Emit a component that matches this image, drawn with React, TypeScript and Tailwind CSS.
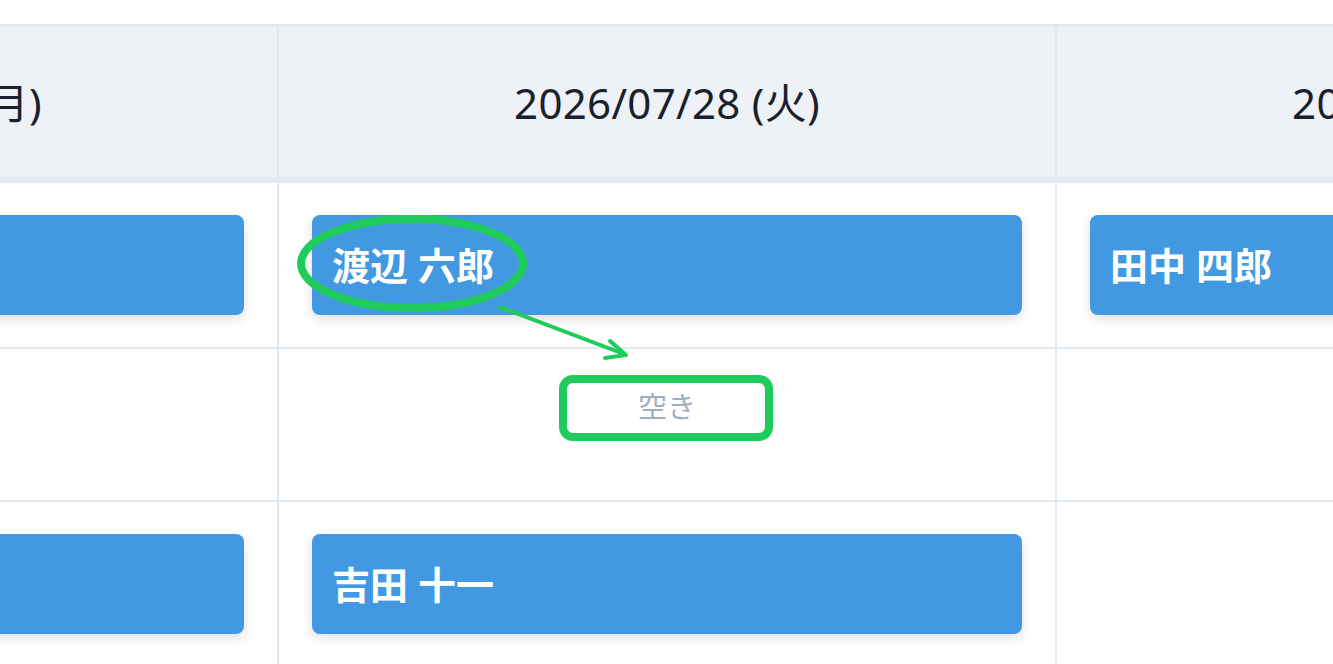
import React from "react";

type Cell = { name?: string; empty?: boolean };

const days = ["2026/07/27 (月)", "2026/07/28 (火)", "2026/07/29 (水)"];

const rows: { h: string; cells: Cell[] }[] = [
  { h: "h-[164px]", cells: [{ name: "佐藤 一郎" }, { name: "渡辺 六郎" }, { name: "田中 四郎" }] },
  { h: "h-[151px]", cells: [{ empty: true }, { empty: true }, { empty: true }] },
  { h: "h-[164px]", cells: [{ name: "鈴木 二郎" }, { name: "吉田 十一" }, {}] },
];

const font = { fontFamily: '"Noto Sans", "Noto Sans CJK JP", sans-serif' };

function Card({ name }: { name: string }) {
  return (
    <div className="h-[100px] rounded-[8px] bg-[#4299e1] flex items-center pl-[20px] text-white font-bold text-[38px] shadow-[0_4px_12px_rgba(0,0,0,0.13)]">
      {name}
    </div>
  );
}

export default function App() {
  return (
    <div className="relative w-[1333px] h-[664px] overflow-hidden bg-white" style={font}>
      <div className="h-[24px]" />
      <div className="ml-[-499px] w-[2334px] border-t-[3px] border-[#e2e8f0]">
        <div className="flex bg-[#eef2f7] border-b-[6px] border-[#e2e8f0]">
          {days.map((d) => (
            <div
              key={d}
              className="w-[778px] shrink-0 h-[150px] border-r-2 border-[#e2e8f0] flex items-center justify-center text-[42px] tracking-[0.3px] text-[#1a202c]"
            >
              {d}
            </div>
          ))}
        </div>
        {rows.map((r, i) => (
          <div key={i} className="flex border-b-2 border-[#e2e8f0]">
            {r.cells.map((c, j) => (
              <div
                key={j}
                className={`w-[778px] shrink-0 ${r.h} border-r-2 border-[#e2e8f0] px-[33px] pt-[32px]`}
              >
                {c.name && <Card name={c.name} />}
                {c.empty && (
                  <div className="flex justify-center pt-[1px] leading-[50px] text-[29px] text-[#a0aec0]">空き</div>
                )}
              </div>
            ))}
          </div>
        ))}
      </div>
      <svg
        className="absolute inset-0 pointer-events-none"
        width="1333"
        height="664"
        viewBox="0 0 1333 664"
      >
        <ellipse cx="412" cy="263.5" rx="111" ry="44.5" fill="none" stroke="#1fcc5b" strokeWidth="8" />
        <line x1="500" y1="307" x2="624" y2="354" stroke="#1fcc5b" strokeWidth="4" strokeLinecap="round" />
        <polyline points="610,341 626,355 605,358" fill="none" stroke="#1fcc5b" strokeWidth="4" strokeLinecap="round" strokeLinejoin="round" />
        <rect x="563" y="379" width="206" height="58" rx="10" fill="none" stroke="#1fcc5b" strokeWidth="8" />
      </svg>
    </div>
  );
}
